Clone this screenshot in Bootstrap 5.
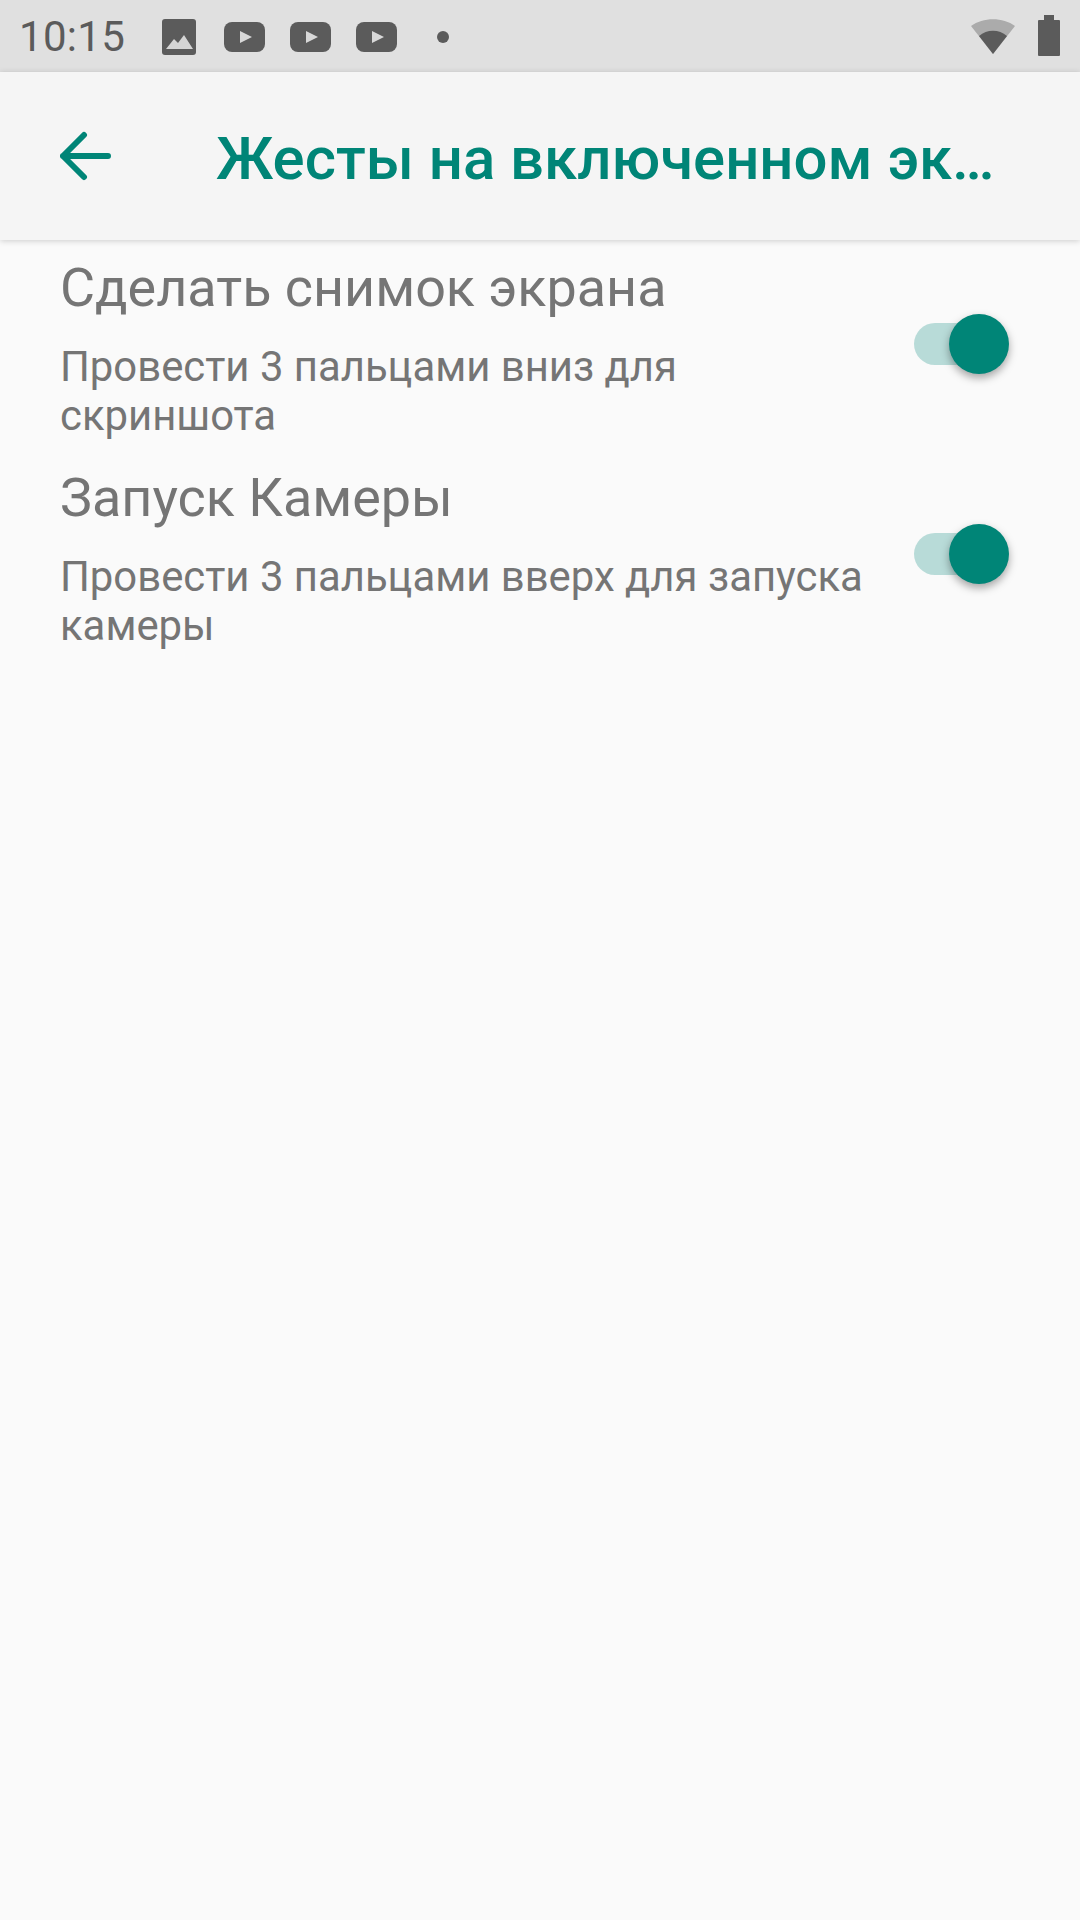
<!DOCTYPE html>
<html lang="ru">
<head>
    <meta charset="UTF-8">
    <meta name="viewport" content="width=device-width, initial-scale=1.0">
    <title>Жесты</title>
    <link href="https://cdn.jsdelivr.net/npm/bootstrap@5.3.0/dist/css/bootstrap.min.css" rel="stylesheet">
    <style>
        html, body { height: 1920px; overflow: hidden; }
        body { background: #fafafa; font-family: Roboto, "Liberation Sans", sans-serif; }
        .status-bar { height: 72px; background: #e0e0e0; color: #5b5b5b; padding: 2px 20px 0 19px; }
        .status-time { font-size: 42px; line-height: 70px; width: 143px; letter-spacing: 0.3px; }
        .status-bar svg { display: block; flex: none; }
        .gap-play-first { margin-left: 28px; }
        .gap-play { margin-left: 25px; }
        .gap-dot { margin-left: 40px; }
        .gap-batt { margin-left: 22px; }
        .raise-icon { margin-top: -4px; }
        .tool-bar { height: 168px; background: #f5f5f5; box-shadow: 0 1px 6px rgba(0, 0, 0, .18); padding-left: 60px; position: relative; }
        .back-arrow { width: 156px; flex: none; }
        .tool-title { font-size: 59.9px; font-weight: 500; color: #008577; padding-top: 6px; }
        .pref-row { height: 210px; padding: 0 80px 0 60px; }
        .pref-text { width: 820px; color: #757575; }
        .pref-name { font-size: 53.9px; line-height: 64px; margin: 0; padding-top: 16px; }
        .pref-sum { font-size: 41.85px; line-height: 49px; margin: 0; padding-top: 22px; }
        .switch-track { width: 86px; height: 42px; border-radius: 21px; background: #b8dbd8; position: relative; margin-top: 83px; flex: none; }
        .switch-knob { position: absolute; right: -9px; top: -9px; width: 60px; height: 60px; border-radius: 50%; background: #008577; box-shadow: 0 4px 8px rgba(0, 0, 0, .35); }
    </style>
</head>
<body>
    <!-- Status bar -->
    <div class="status-bar d-flex align-items-center">
        <div class="status-time">10:15</div>
        <svg width="34" height="36" viewBox="0 0 34 36"><rect width="34" height="36" rx="3" fill="#5b5b5b"/><path d="M4 30l8-10 4 4 6-8 9 14z" fill="#d4d4d4"/></svg>
        <svg class="gap-play-first" width="41" height="30" viewBox="0 0 41 30"><rect width="41" height="30" rx="8" fill="#5b5b5b"/><path d="M16 9l12 6-12 6z" fill="#d8d8d8"/></svg>
        <svg class="gap-play" width="41" height="30" viewBox="0 0 41 30"><rect width="41" height="30" rx="8" fill="#5b5b5b"/><path d="M16 9l12 6-12 6z" fill="#d8d8d8"/></svg>
        <svg class="gap-play" width="41" height="30" viewBox="0 0 41 30"><rect width="41" height="30" rx="8" fill="#5b5b5b"/><path d="M16 9l12 6-12 6z" fill="#d8d8d8"/></svg>
        <svg class="gap-dot" width="12" height="12" viewBox="0 0 12 12"><circle cx="6" cy="6" r="6" fill="#5b5b5b"/></svg>
        <svg class="ms-auto raise-icon" width="46" height="38" viewBox="0 0 46 38"><path d="M1 10C13 1 33 1 45 10L23 38z" fill="#ababab"/><path d="M9 20C17 13 29 13 37 20L23 38z" fill="#5b5b5b"/></svg>
        <svg class="gap-batt raise-icon" width="22" height="41" viewBox="0 0 22 41"><path d="M6 0h10v5h5a1 1 0 0 1 1 1v34a1 1 0 0 1-1 1H1a1 1 0 0 1-1-1V6a1 1 0 0 1 1-1h5z" fill="#5b5b5b"/></svg>
    </div>

    <!-- Toolbar -->
    <div class="tool-bar d-flex align-items-center">
        <div class="back-arrow">
            <svg class="d-block" width="51" height="50" viewBox="0 0 51 50"><path d="M3 25H48M3 25L24 4M3 25L24 46" fill="none" stroke="#008577" stroke-width="6" stroke-linecap="round"/></svg>
        </div>
        <div class="tool-title text-nowrap">Жесты на включенном эк…</div>
    </div>

    <!-- Preference rows -->
    <div class="pref-row d-flex justify-content-between">
        <div class="pref-text">
            <p class="pref-name">Сделать снимок экрана</p>
            <p class="pref-sum">Провести 3 пальцами вниз для скриншота</p>
        </div>
        <div class="switch-track"><div class="switch-knob"></div></div>
    </div>
    <div class="pref-row d-flex justify-content-between">
        <div class="pref-text">
            <p class="pref-name">Запуск Камеры</p>
            <p class="pref-sum">Провести 3 пальцами вверх для запуска камеры</p>
        </div>
        <div class="switch-track"><div class="switch-knob"></div></div>
    </div>

    <script src="https://cdn.jsdelivr.net/npm/bootstrap@5.3.0/dist/js/bootstrap.bundle.min.js"></script>
</body>
</html>
